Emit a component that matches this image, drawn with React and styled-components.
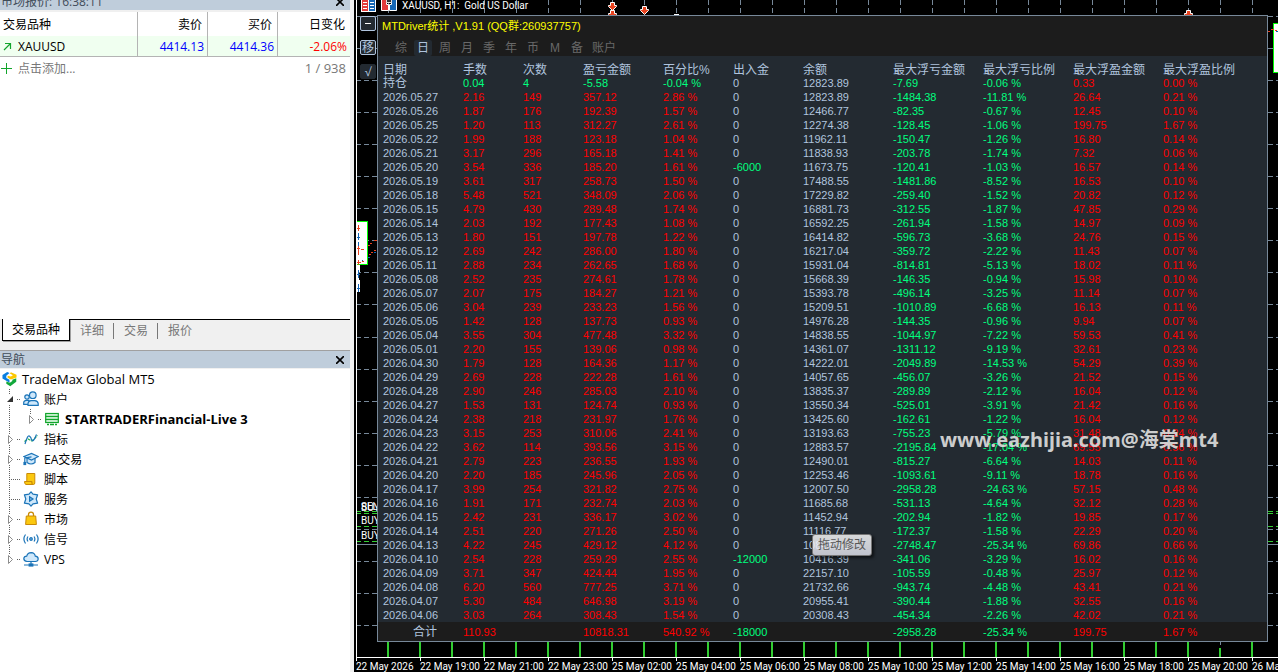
import React, { useState } from "react";
import styled, { createGlobalStyle, css } from "styled-components";

const DAYS = `
2026.05.27|2.16|149|357.12|2.86 %|0|12823.89|-1484.38|-11.81 %|26.64|0.21 %
2026.05.26|1.87|176|192.39|1.57 %|0|12466.77|-82.35|-0.67 %|12.45|0.10 %
2026.05.25|1.20|113|312.27|2.61 %|0|12274.38|-128.45|-1.06 %|199.75|1.67 %
2026.05.22|1.99|188|123.18|1.04 %|0|11962.11|-150.47|-1.26 %|16.80|0.14 %
2026.05.21|3.17|296|165.18|1.41 %|0|11838.93|-203.78|-1.74 %|7.32|0.06 %
2026.05.20|3.54|336|185.20|1.61 %|-6000|11673.75|-120.41|-1.03 %|16.57|0.14 %
2026.05.19|3.61|317|258.73|1.50 %|0|17488.55|-1481.86|-8.52 %|16.53|0.10 %
2026.05.18|5.48|521|348.09|2.06 %|0|17229.82|-259.40|-1.52 %|20.82|0.12 %
2026.05.15|4.79|430|289.48|1.74 %|0|16881.73|-312.55|-1.87 %|47.85|0.29 %
2026.05.14|2.03|192|177.43|1.08 %|0|16592.25|-261.94|-1.58 %|14.97|0.09 %
2026.05.13|1.80|151|197.78|1.22 %|0|16414.82|-596.73|-3.68 %|24.76|0.15 %
2026.05.12|2.69|242|286.00|1.80 %|0|16217.04|-359.72|-2.22 %|11.43|0.07 %
2026.05.11|2.88|234|262.65|1.68 %|0|15931.04|-814.81|-5.13 %|18.02|0.11 %
2026.05.08|2.52|235|274.61|1.78 %|0|15668.39|-146.35|-0.94 %|15.98|0.10 %
2026.05.07|2.07|175|184.27|1.21 %|0|15393.78|-496.14|-3.25 %|11.14|0.07 %
2026.05.06|3.04|239|233.23|1.56 %|0|15209.51|-1010.89|-6.68 %|16.13|0.11 %
2026.05.05|1.42|128|137.73|0.93 %|0|14976.28|-144.35|-0.96 %|9.94|0.07 %
2026.05.04|3.55|304|477.48|3.32 %|0|14838.55|-1044.97|-7.22 %|59.53|0.41 %
2026.05.01|2.20|155|139.06|0.98 %|0|14361.07|-1311.12|-9.19 %|32.61|0.23 %
2026.04.30|1.79|128|164.36|1.17 %|0|14222.01|-2049.89|-14.53 %|54.29|0.39 %
2026.04.29|2.69|228|222.28|1.61 %|0|14057.65|-456.07|-3.26 %|21.52|0.15 %
2026.04.28|2.90|246|285.03|2.10 %|0|13835.37|-289.89|-2.12 %|16.04|0.12 %
2026.04.27|1.53|131|124.74|0.93 %|0|13550.34|-525.01|-3.91 %|21.42|0.16 %
2026.04.24|2.38|218|231.97|1.76 %|0|13425.60|-162.61|-1.22 %|16.04|0.12 %
2026.04.23|3.15|253|310.06|2.41 %|0|13193.63|-755.23|-5.79 %|31.48|0.24 %
2026.04.22|3.62|114|393.56|3.15 %|0|12883.57|-2195.84|-17.04 %|69.55|0.56 %
2026.04.21|2.79|223|236.55|1.93 %|0|12490.01|-815.27|-6.64 %|14.03|0.11 %
2026.04.20|2.20|185|245.96|2.05 %|0|12253.46|-1093.61|-9.11 %|18.78|0.16 %
2026.04.17|3.99|254|321.82|2.75 %|0|12007.50|-2958.28|-24.63 %|57.15|0.48 %
2026.04.16|1.91|171|232.74|2.03 %|0|11685.68|-531.13|-4.64 %|32.12|0.28 %
2026.04.15|2.42|231|336.17|3.02 %|0|11452.94|-202.94|-1.82 %|19.85|0.17 %
2026.04.14|2.51|220|271.26|2.50 %|0|11116.77|-172.37|-1.58 %|22.29|0.20 %
2026.04.13|4.22|245|429.12|4.12 %|0|10845.51|-2748.47|-25.34 %|69.86|0.66 %
2026.04.10|2.54|228|259.29|2.55 %|-12000|10416.39|-341.06|-3.29 %|16.02|0.16 %
2026.04.09|3.71|347|424.44|1.95 %|0|22157.10|-105.59|-0.48 %|25.97|0.12 %
2026.04.08|6.20|560|777.25|3.71 %|0|21732.66|-943.74|-4.48 %|43.41|0.21 %
2026.04.07|5.30|484|646.98|3.19 %|0|20955.41|-390.44|-1.88 %|32.55|0.16 %
2026.04.06|3.03|264|308.43|1.54 %|0|20308.43|-454.34|-2.26 %|42.02|0.21 %
`
  .trim()
  .split("\n")
  .map((line) => line.split("|"));

const HOLDING = ["持仓", "0.04", "4", "-5.58", "-0.04 %", "0", "12823.89", "-7.69", "-0.06 %", "0.33", "0.00 %"];
const TOTAL = ["合计", "110.93", "", "10818.31", "540.92 %", "-18000", "", "-2958.28", "-25.34 %", "199.75", "1.67 %"];

const COLUMNS = [
  { name: "日期", width: 85 },
  { name: "手数", width: 60 },
  { name: "次数", width: 60 },
  { name: "盈亏金额", width: 80 },
  { name: "百分比%", width: 70 },
  { name: "出入金", width: 70 },
  { name: "余额", width: 90 },
  { name: "最大浮亏金额", width: 90 },
  { name: "最大浮亏比例", width: 90 },
  { name: "最大浮盈金额", width: 90 },
  { name: "最大浮盈比例" },
];

const PERIODS = ["综", "日", "周", "月", "季", "年", "币", "M", "备", "账户"];

const TIMES = [
  "22 May 2026",
  "22 May 19:00",
  "22 May 21:00",
  "22 May 23:00",
  "25 May 02:00",
  "25 May 04:00",
  "25 May 06:00",
  "25 May 08:00",
  "25 May 10:00",
  "25 May 12:00",
  "25 May 14:00",
  "25 May 16:00",
  "25 May 18:00",
  "25 May 20:00",
  "26 May 02:00",
];

const toneOf = (value, col) => {
  if (value.startsWith("-")) return "down";
  if (col === 0 || col === 6 || (col === 5 && value === "0")) return "plain";
  return "up";
};

const range = (n) => Array.from({ length: n }, (_, i) => i);

const BrandIcon = () => (
  <svg width="15" height="16" viewBox="0 0 16 16">
    <path d="M0.5 3.6 L5.5 0.6 L8 1.6 L4.6 4.4 V7 L8 8.8 V12 L0.5 7.4 Z" fill="#0a7fe0" />
    <path d="M9.5 0.8 L15.5 3.4 V6.4 L9.5 8.6 L6 6.6 V4.4 L9.5 5.4 L11.6 4 L8.4 2.2 Z" fill="#fcc800" />
    <path d="M15.2 7.2 V11 L8.8 15.6 L4.6 13 V10.6 L8.4 12 L11 10.2 V8.8 Z" fill="#12a83a" />
  </svg>
);

const AccountsIcon = () => (
  <svg width="16" height="16" viewBox="0 0 16 16" fill="#cfe8fb" stroke="#1b74b8" strokeWidth="1.2">
    <circle cx="4" cy="6" r="2.2" />
    <path d="M0.7 13.4 V11.5 Q1 9.5 3.5 9.4 H6 V13.4 Z" />
    <circle cx="9.8" cy="4.2" r="3.3" />
    <path d="M5 14.4 V12.5 Q5.4 9.7 8 9.6 H11.8 Q14.8 9.8 15.2 12.5 V14.4 Z" />
  </svg>
);

const ServerIcon = () => (
  <svg width="16" height="14" viewBox="0 0 16 14" fill="none" stroke="#12a52c">
    <rect x="1.7" y="1.5" width="12.6" height="3" fill="#d9f7dd" strokeWidth="1.2" />
    <rect x="1.7" y="4.5" width="12.6" height="3" fill="#d9f7dd" strokeWidth="1.2" />
    <rect x="1.7" y="7.5" width="12.6" height="3" fill="#d9f7dd" strokeWidth="1.2" />
    <path d="M6 12.5 H10 M3 12.5 H5 M11 12.5 H13" strokeWidth="1.4" />
  </svg>
);

const IndicatorIcon = () => (
  <svg width="16" height="16" viewBox="0 0 16 16" fill="none" strokeWidth="1.2">
    <path d="M1.5 10.5 L5 8 L9 10 L14.5 4.5" stroke="#22b14c" strokeDasharray="3 1" />
    <path d="M2 13 Q4.5 4 6.3 5 Q8 6 8.5 8.5 Q10 12.5 13.5 3.5" stroke="#1b74b8" />
  </svg>
);

const ExpertIcon = () => (
  <svg width="16" height="16" viewBox="0 0 16 16" fill="#cfe8fb" stroke="#1b74b8" strokeWidth="1.2">
    <path d="M4 7 V11.5 Q8 14.5 12 11.5 V7" />
    <path d="M1 5.5 L8.5 2.5 L15.3 5.5 L8.5 9 Z" />
    <path d="M8.5 5.8 L1.8 7 V12.5" fill="none" />
    <rect x="1" y="11.5" width="1.6" height="2" fill="#1b74b8" />
  </svg>
);

const ScriptIcon = () => (
  <svg width="16" height="16" viewBox="0 0 16 16" fill="#fbc80f" stroke="#c98a07">
    <path d="M3.8 2.5 H11.8 V12 Q11.8 13.5 10.2 13.5 H8.8 V10.5 H3.8 Z" />
    <path d="M1.5 10.5 H8.8 V12.2 Q9 13.3 10 13.5 H3 Q1.5 13.3 1.5 10.5 Z" />
  </svg>
);

const ServiceIcon = () => (
  <svg width="16" height="16" viewBox="0 0 16 16" strokeWidth="1.2">
    <path
      d="M8 0.8 L10 3.2 L14.6 3.8 L13.2 8 L14.6 12.2 L10 12.8 L8 15.2 L6 12.8 L1.4 12.2 L2.8 8 L1.4 3.8 L6 3.2 Z"
      fill="#cfe8fb"
      stroke="#1b74b8"
      strokeLinejoin="round"
    />
    <path d="M6.6 5.8 L10 8 L6.6 10.2 Z" fill="#7fc0ee" stroke="#1b74b8" />
  </svg>
);

const MarketIcon = () => (
  <svg width="16" height="16" viewBox="0 0 16 16" stroke="#c98a07">
    <path d="M5.5 6 V3.5 Q5.5 1.2 8 1.2 Q10.5 1.2 10.5 3.5 V6" fill="none" strokeWidth="1.3" />
    <path d="M3.3 5 H12.7 L13.4 13.5 H2.6 Z" fill="#fbc80f" />
  </svg>
);

const SignalIcon = () => (
  <svg width="16" height="16" viewBox="0 0 16 16" fill="none" stroke="#1b74b8" strokeWidth="1.2">
    <path d="M2.5 3.5 Q-0.7 8 2.5 12.5 M13.5 3.5 Q16.7 8 13.5 12.5 M5 5.5 Q3.2 8 5 10.5 M11 5.5 Q12.8 8 11 10.5" />
    <circle cx="8" cy="8" r="1.3" fill="#7fc0ee" />
  </svg>
);

const CloudIcon = () => (
  <svg width="16" height="16" viewBox="0 0 16 16" stroke="#1b74b8" strokeWidth="1.2">
    <path
      d="M4 10.5 Q0.8 10.2 0.8 7.6 Q1 5.3 3.7 5.2 Q4.6 1.6 8.2 1.6 Q11.8 1.8 12.3 5.2 Q15.2 5.5 15.2 8 Q15 10.4 12.4 10.5 Z"
      fill="#cfe8fb"
    />
    <path d="M8 10.5 V13 M1 14 H6 M10 14 H15" />
    <rect x="6.2" y="13" width="3.6" height="2" fill="#1b74b8" />
  </svg>
);

// dotted connector plus the expander triangle in front of a tree node
const Branch = ({ state, last, nested }) => {
  const x = nested ? 21 : 0;

  return (
    <svg width={x + 23} height="20" fill="none" shapeRendering="crispEdges">
      {nested && <path d="M9.5 0 V20" stroke="#606060" strokeDasharray="1 1" />}
      <g transform={`translate(${x} 0)`}>
        <path
          d={state === "none" ? "M9.5 0 V20" : `M9.5 0 V5 ${last ? "" : "M9.5 16 V20"}`}
          stroke="#606060"
          strokeDasharray="1 1"
        />
        <path d={state === "none" ? "M11 10.5 H21" : "M17 10.5 H21"} stroke="#606060" strokeDasharray="1 1" />
        {state === "closed" && (
          <path d="M8.5 6.5 V14.5 L12.5 10.5 Z" fill="#fff" stroke="#8c8c8c" shapeRendering="auto" />
        )}
        {state === "open" && <path d="M7 13 L13 7 V13 Z" fill="#333" shapeRendering="auto" />}
      </g>
    </svg>
  );
};

const NODES = [
  { label: "指标", icon: <IndicatorIcon />, state: "closed" },
  { label: "EA交易", icon: <ExpertIcon />, state: "closed" },
  { label: "脚本", icon: <ScriptIcon />, state: "none" },
  { label: "服务", icon: <ServiceIcon />, state: "none" },
  { label: "市场", icon: <MarketIcon />, state: "closed" },
  { label: "信号", icon: <SignalIcon />, state: "closed" },
  { label: "VPS", icon: <CloudIcon />, state: "closed", last: true },
];

const SellArrow = ({ x, y }) => (
  <path
    d="M-2 -4 H2 V-1 H4 V0 L0 4 L-4 0 V-1 H-2 Z"
    transform={`translate(${x} ${y})`}
    fill="#e8431f"
    stroke="#fff"
  />
);

const GRID_Y = [16, 48, 80, 112, 144, 176, 208, 240, 272, 304, 337, 369, 401, 433, 465, 497, 529, 561, 593, 625];

const PriceChart = () => (
  <ChartCanvas aria-hidden="true">
    <g stroke="#778899" strokeDasharray="5 3" shapeRendering="crispEdges">
      {range(60).map((i) => (
        <line key={i} x1={i * 32 + 32.5} x2={i * 32 + 32.5} y1="0" y2="645" />
      ))}
      {GRID_Y.map((y) => (
        <line key={y} x1="0" x2="100%" y1={y + 0.5} y2={y + 0.5} />
      ))}
    </g>
    <g stroke="#32cd32" strokeDasharray="5 3" shapeRendering="crispEdges">
      {[511, 513, 526, 541].map((y) => (
        <line key={y} x1="0" x2="100%" y1={y + 0.5} y2={y + 0.5} />
      ))}
    </g>
    <line x1="0" x2="100%" y1="544.5" y2="544.5" stroke="#778899" />
    <g fill="#32cd32" shapeRendering="crispEdges">
      {range(60).map((i) => (
        <rect key={i} x={i * 32 + 31} y={i === 26 ? 648 : 642} width="2" height="15" />
      ))}
    </g>
    <g fill="#fff" fontFamily="Roboto, sans-serif" fontSize="10">
      <text x="5" y="510">SELL</text>
      <text x="5" y="511">BUY</text>
      <text x="5" y="524">BUY</text>
      <text x="5" y="539">BUY</text>
    </g>
    <g shapeRendering="crispEdges">
      <path d="M0 221.5 H11.5 V264.5 H0" fill="#fff" stroke="#00ff00" />
      <path d="M0 265 H4 V272 H3 V280 H4 V292 H0 Z" fill="#fff" />
      <path
        d="M2.5 225 V231 M1 228.5 H4 M2.5 246 V251 M1 248.5 H4 M2.5 251 V255 M5 249.5 H8 M2.5 260 V265 M1 262.5 H5 M6 261.5 H8 M12 245.5 H14 M14 243.5 H16 M18 240.5 H21 M13 254.5 H15 M15 252.5 H17 M18 250.5 H20"
        stroke="#e8431f"
      />
      <path
        d="M2.5 233 V240 M1 237.5 H4 M2.5 242 V246 M6 260.5 H7 M12 257.5 H14 M18 252.5 H20 M2.5 270 V278 M1 274.5 H4 M2.5 284 V292 M1 288.5 H4"
        stroke="#1464b4"
      />
      <path d="M0.5 0 V657" stroke="#fff" />
    </g>
    <SellArrow x={256.5} y={14.5} />
    <SellArrow x={256.5} y={6.5} />
    <SellArrow x={288.5} y={10.5} />
    <SellArrow x={832.5} y={14.5} />
    <rect x="318" y="14" width="5" height="1" fill="#fff" />
    <svg x="100%" overflow="visible">
      <rect x="-4.5" y="23.5" width="10" height="49" fill="#fff" stroke="#00ff00" />
      <path d="M-10 31.5 H-8 M-7 29.5 H-4 M-3 30.5 H-1" stroke="#e8431f" shapeRendering="crispEdges" />
      <path d="M-2 31.5 H0" stroke="#1464b4" shapeRendering="crispEdges" />
    </svg>
  </ChartCanvas>
);

const StatRow = ({ cells, holding, total }) => (
  <StatTr $total={total}>
    {cells.map((value, i) => (
      <StatTd
        key={i}
        $tone={holding && (i === 1 || i === 2) ? "down" : toneOf(value, i)}
        $label={i === 0 && !/\d/.test(value)}
        $indent={total && i === 0}
      >
        {value}
      </StatTd>
    ))}
  </StatTr>
);

const App = () => {
  const [period, setPeriod] = useState("日");

  return (
    <>
      <GlobalStyle />
      <Layout>
        <Sidebar>
          <DockHeader $cut>
            <span>市场报价: 16:38:11</span>
            <CloseButton aria-label="关闭市场报价">
              <svg width="8" height="8" stroke="#000" strokeWidth="1.6">
                <path d="M0 0 L8 8 M8 0 L0 8" />
              </svg>
            </CloseButton>
          </DockHeader>
          <MarketBody>
            <QuoteTable>
              <colgroup>
                <QuoteCol $width="138px" />
                <QuoteCol $width="70px" />
                <QuoteCol $width="70px" />
                <QuoteCol $width="auto" />
              </colgroup>
              <thead>
                <tr>
                  <QuoteTh>交易品种</QuoteTh>
                  <QuoteTh>卖价</QuoteTh>
                  <QuoteTh>买价</QuoteTh>
                  <QuoteTh>日变化</QuoteTh>
                </tr>
              </thead>
              <tbody>
                <tr>
                  <QuoteTd>
                    <Symbol>
                      <svg width="9" height="9" fill="none" stroke="#12a52c" strokeWidth="1.2">
                        <path d="M1 8 L7.5 1.5 M2 1.5 H7.5 V7" />
                      </svg>
                      XAUUSD
                    </Symbol>
                  </QuoteTd>
                  <QuoteTd $color="#0000ff">4414.13</QuoteTd>
                  <QuoteTd $color="#0000ff">4414.36</QuoteTd>
                  <QuoteTd $color="#ff0000">-2.06%</QuoteTd>
                </tr>
              </tbody>
            </QuoteTable>
            <AddRow>
              <AddButton>
                <svg width="11" height="11" stroke="#12a52c">
                  <path d="M5.5 0 V11 M0 5.5 H11" />
                </svg>
                点击添加...
              </AddButton>
              <span>1 / 938</span>
            </AddRow>
          </MarketBody>
          <DockTabs>
            <DockTab $active>交易品种</DockTab>
            <DockTab $divided>详细</DockTab>
            <DockTab $divided>交易</DockTab>
            <DockTab>报价</DockTab>
            <TabLine />
          </DockTabs>
          <DockHeader $line>
            <span>导航</span>
            <CloseButton aria-label="关闭导航">
              <svg width="8" height="8" stroke="#000" strokeWidth="1.6">
                <path d="M0 0 L8 8 M8 0 L0 8" />
              </svg>
            </CloseButton>
          </DockHeader>
          <Tree>
            <TreeRow $root>
              <BrandIcon />
              <span>TradeMax Global MT5</span>
            </TreeRow>
            <TreeRow>
              <Branch state="open" />
              <AccountsIcon />
              <span>账户</span>
            </TreeRow>
            <TreeRow>
              <Branch state="closed" last nested />
              <ServerIcon />
              <strong>STARTRADERFinancial-Live 3</strong>
            </TreeRow>
            {NODES.map((node) => (
              <TreeRow key={node.label}>
                <Branch state={node.state} last={node.last} />
                {node.icon}
                <span>{node.label}</span>
              </TreeRow>
            ))}
          </Tree>
        </Sidebar>

        <Chart>
          <PriceChart />
          <ChartTitle>
            <svg width="15" height="12">
              <rect width="15" height="12" fill="#fff" />
              <path d="M1 0 H7 V11 H1 Z" fill="#e23b3b" />
              <path d="M8 0 H14 V11 H8 Z" fill="#1667b5" />
              <path d="M2 2.5 H6 M2 5.5 H6 M2 8.5 H6 M9 2.5 H13 M9 5.5 H13 M9 8.5 H13" stroke="#fff" />
            </svg>
            <svg width="16" height="12">
              <path d="M0.5 -1 H5.5 V4.5 H7.5 V10.5 H0.5 Z" fill="#e23b3b" stroke="#fff" />
              <path d="M10.5 -1 H15.5 V10.5 H8.5 V4.5 H10.5 Z" fill="#1667b5" stroke="#fff" />
              <path d="M5.5 -1 H10.5 V2.5 H5.5 Z" fill="#333" stroke="#ddd" />
            </svg>
            <span>XAUUSD, H1:&nbsp; Gold US Dollar</span>
          </ChartTitle>
          <ChartMain>
            <Tools>
              <ToolButton $framed aria-label="最小化">
                <svg width="6" height="1">
                  <rect width="6" height="1" fill="#fff" />
                </svg>
              </ToolButton>
              <ToolButton $framed>移</ToolButton>
              <ToolButton>√</ToolButton>
            </Tools>
            <Panel>
              <PanelTitle>MTDriver统计 ,V1.91 (QQ群:260937757)</PanelTitle>
              <PeriodTabs>
                {PERIODS.map((name) => (
                  <PeriodTab key={name} $active={name === period} onClick={() => setPeriod(name)}>
                    {name}
                  </PeriodTab>
                ))}
              </PeriodTabs>
              <StatTable>
                <colgroup>
                  {COLUMNS.map((col) => (
                    <StatCol key={col.name} $width={col.width} />
                  ))}
                </colgroup>
                <thead>
                  <tr>
                    {COLUMNS.map((col) => (
                      <StatTh key={col.name}>{col.name}</StatTh>
                    ))}
                  </tr>
                </thead>
                <tbody>
                  <StatRow cells={HOLDING} holding />
                  {DAYS.map((cells) => (
                    <StatRow key={cells[0]} cells={cells} />
                  ))}
                </tbody>
                <tfoot>
                  <StatRow cells={TOTAL} total />
                </tfoot>
              </StatTable>
              <Watermark>www.eazhijia.com@海棠mt4</Watermark>
              <DragHint role="tooltip">拖动修改</DragHint>
            </Panel>
          </ChartMain>
          <TimeAxis>
            {TIMES.map((time) => (
              <TimeLabel key={time}>{time}</TimeLabel>
            ))}
          </TimeAxis>
        </Chart>
      </Layout>
    </>
  );
};

export default App;

const GlobalStyle = createGlobalStyle`
  * {
    box-sizing: border-box;
  }

  body {
    margin: 0;
    background: #f0f0f0;
    font-family: "Open Sans", "Noto Sans CJK SC", sans-serif;
    font-size: 12px;
  }

  button {
    margin: 0;
    padding: 0;
    border: none;
    background: none;
    font: inherit;
    color: inherit;
    cursor: pointer;
  }

  svg {
    display: block;
    flex-shrink: 0;
  }
`;

const Layout = styled.div`
  display: flex;
  min-height: 100vh;
`;

const Sidebar = styled.aside`
  display: flex;
  flex-direction: column;
  width: 350px;
  flex-shrink: 0;
`;

const DockHeader = styled.header`
  display: flex;
  justify-content: space-between;
  align-items: flex-end;
  height: ${(props) => (props.$cut ? "10px" : "18px")};
  padding: 0 6px 0 1px;
  overflow: hidden;
  border-top: ${(props) => (props.$line ? "1px solid #a0a0a0" : "none")};
  background-color: #bfcddb;
  color: #3f4c59;
  line-height: 17px;
`;

const CloseButton = styled.button`
  display: flex;
  align-items: center;
  height: 17px;
`;

const MarketBody = styled.section`
  height: 307px;
  margin-top: 2px;
  background-color: #fff;
`;

const QuoteTable = styled.table`
  width: 100%;
  table-layout: fixed;
  border-collapse: separate;
  border-spacing: 0;
`;

const QuoteCol = styled.col`
  width: ${(props) => props.$width};
`;

const quoteCell = css`
  text-align: right;
  border-right: 1px solid #b4b4b4;

  &:first-child {
    text-align: left;
    padding-left: 3px;
  }

  &:last-child {
    border-right: none;
  }
`;

const QuoteTh = styled.th`
  ${quoteCell}
  height: 24px;
  padding: 0 5px 0 0;
  font-weight: 400;
`;

const QuoteTd = styled.td`
  ${quoteCell}
  height: 21px;
  padding: 0 3px 0 0;
  border-bottom: 1px solid #b4b4b4;
  background-color: #f0fff0;
  color: ${(props) => props.$color || "#000"};
`;

const Symbol = styled.span`
  display: flex;
  align-items: center;
  gap: 6px;
  font-size: 12px;
`;

const AddRow = styled.div`
  display: flex;
  justify-content: space-between;
  align-items: center;
  height: 22px;
  padding: 0 4px 0 1px;
  color: #787878;
  font-size: 13px;
`;

const AddButton = styled.button`
  display: flex;
  align-items: center;
  gap: 6px;
  font-size: 12px;
`;

const DockTabs = styled.nav`
  display: flex;
  height: 31px;
  padding-left: 2px;
`;

const TabLine = styled.div`
  flex: 1;
  border-top: 1px solid #000;
`;

const DockTab = styled.button`
  height: 22px;
  padding: 0 10px;
  border-top: 1px solid #000;
  color: #787878;
  line-height: 18px;
  white-space: nowrap;
  background: ${(props) =>
    props.$divided ? "linear-gradient(#787878, #787878) 100% 3px / 1px 16px no-repeat" : "none"};

  ${(props) =>
    props.$active &&
    css`
      padding: 0 9px;
      border: 1px solid #000;
      border-top: none;
      background-color: #fff;
      box-shadow: 1px 1px 0 #a0a0a0;
      color: #000;
    `}
`;

const Tree = styled.section`
  flex: 1;
  margin-top: 1px;
  background-color: #fff;
`;

const TreeRow = styled.div`
  display: flex;
  align-items: center;
  gap: 5px;
  height: 20px;
  padding-left: ${(props) => (props.$root ? "2px" : "0")};
  white-space: nowrap;

  svg + svg {
    margin-left: -5px;
  }

  span {
    font-size: ${(props) => (props.$root ? "13px" : "12px")};
  }

  strong {
    font-size: 13px;
  }
`;

const Chart = styled.main`
  position: relative;
  display: flex;
  flex-direction: column;
  flex: 1;
  min-width: 0;
  margin-left: 4px;
  border-left: 2px solid #000;
  background-color: #000;
  overflow: hidden;
`;

const ChartCanvas = styled.svg`
  position: absolute;
  top: 0;
  left: 0;
  width: 100%;
  height: 657px;
`;

const ChartTitle = styled.div`
  position: relative;
  display: flex;
  gap: 5px;
  height: 15px;
  padding-left: 5px;
  color: #fff;
  font-family: Roboto, sans-serif;
  font-size: 10px;
  line-height: 12px;
`;

const ChartMain = styled.div`
  position: relative;
  display: flex;
  padding-right: 10px;
  margin-bottom: 15px;
`;

const Tools = styled.div`
  display: flex;
  flex-direction: column;
  gap: 9px;
  width: 21px;
  padding: 1px 0 0 4px;
`;

const ToolButton = styled.button`
  display: flex;
  align-items: center;
  justify-content: center;
  width: 16px;
  height: 15px;
  border: 1px solid ${(props) => (props.$framed ? "#b0c4de" : "#232a31")};
  border-radius: 2px;
  background-color: #232a31;
  color: #b0c4de;
  line-height: 13px;
`;

const Panel = styled.section`
  position: relative;
  flex: 1;
  min-width: 0;
  border: 1px solid #778899;
  background-color: #1c1c1c;
  color: #b0c4de;
  font-family: "Liberation Sans", "Noto Sans CJK SC", sans-serif;
`;

const PanelTitle = styled.h1`
  height: 20px;
  margin: 0;
  padding-left: 4px;
  color: #ffff00;
  font-size: 11px;
  font-weight: 400;
  line-height: 21px;
`;

const PeriodTabs = styled.div`
  display: flex;
  gap: 4px;
  height: 20px;
  padding: 4px 0 0 14px;
`;

const PeriodTab = styled.button`
  min-width: 18px;
  height: 16px;
  padding: 0 2px;
  border-radius: 2px;
  background-color: ${(props) => (props.$active ? "#232a31" : "transparent")};
  color: ${(props) => (props.$active ? "#b0c4de" : "#696969")};
  line-height: 16px;
`;

const StatTable = styled.table`
  width: 100%;
  table-layout: fixed;
  border-spacing: 0;
  background-color: #232a31;
  font-size: 11px;
`;

const StatCol = styled.col`
  width: ${(props) => (props.$width ? `${props.$width}px` : "auto")};
`;

const StatTh = styled.th`
  height: 20px;
  padding: 8px 0 0;
  font-size: 12px;
  font-weight: 400;
  line-height: 12px;
  text-align: left;
  white-space: nowrap;

  &:first-child {
    padding-left: 5px;
  }
`;

const StatTr = styled.tr`
  height: ${(props) => (props.$total ? "19px" : "14px")};
  background-color: ${(props) => (props.$total ? "#1c1c1c" : "transparent")};
`;

const TONES = { up: "#ff0000", down: "#00ff7f", plain: "#b0c4de" };

const StatTd = styled.td`
  padding: 0;
  color: ${(props) => TONES[props.$tone]};
  font-size: ${(props) => (props.$label ? "12px" : "11px")};
  line-height: 14px;
  white-space: nowrap;

  &:first-child {
    padding-left: ${(props) => (props.$indent ? "35px" : "5px")};
  }
`;

const Watermark = styled.div`
  position: absolute;
  top: 410px;
  left: 562px;
  color: rgba(222, 222, 222, 0.92);
  font-family: "Noto Sans", "Noto Sans CJK SC", sans-serif;
  font-size: 20px;
  font-weight: 700;
  line-height: 28px;
  white-space: nowrap;
  pointer-events: none;
`;

const DragHint = styled.div`
  position: absolute;
  top: 518px;
  left: 434px;
  height: 22px;
  padding: 0 5px;
  border: 1px solid #767676;
  border-radius: 3px;
  background: linear-gradient(rgba(255, 255, 255, 0.82), rgba(228, 229, 240, 0.82));
  box-shadow: 2px 2px 3px rgba(0, 0, 0, 0.6);
  color: #575757;
  line-height: 20px;
`;

const TimeAxis = styled.div`
  position: relative;
  display: flex;
  height: 15px;
  border-top: 1px solid #fff;
  background-color: #000;
  color: #fff;
  font-family: Roboto, sans-serif;
  font-size: 10px;
  line-height: 12px;
`;

const TimeLabel = styled.span`
  flex: 0 0 64px;
  padding-top: 3px;
  white-space: nowrap;
  background: linear-gradient(#fff, #fff) 0 0 / 1px 3px no-repeat;
`;
